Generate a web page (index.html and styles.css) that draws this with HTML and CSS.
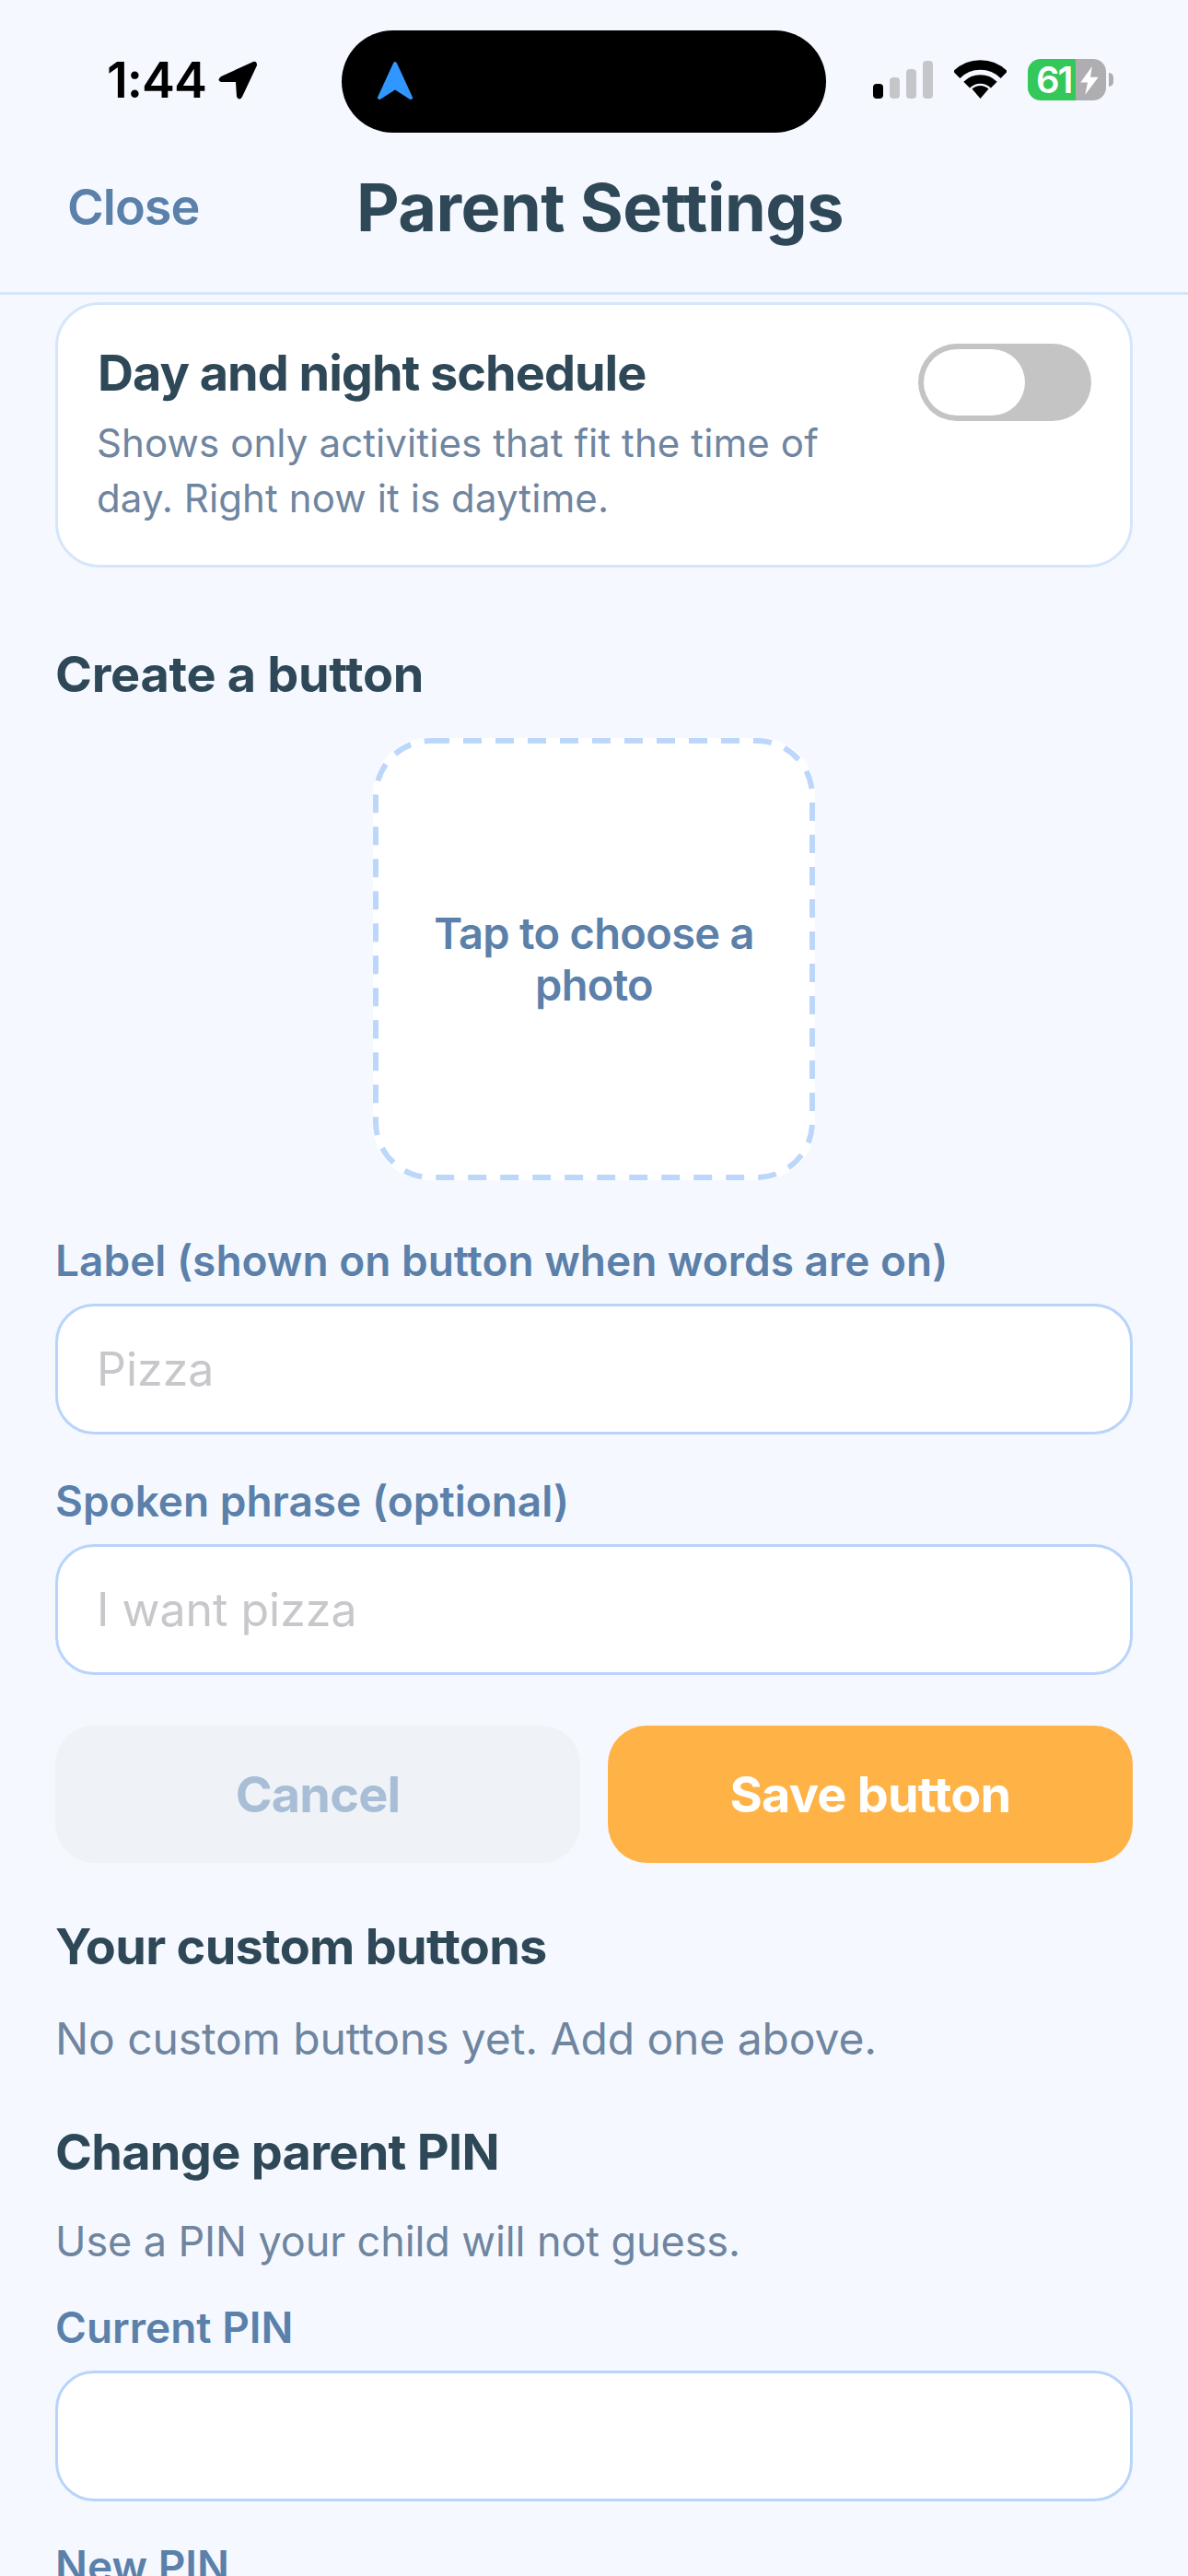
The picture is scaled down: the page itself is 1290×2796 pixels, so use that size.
FILE: index.html
```html
<!DOCTYPE html>
<html lang="en">
<head>
<meta charset="utf-8">
<title>Parent Settings</title>
<link rel="stylesheet" href="styles.css">
</head>
<body>
<div class="screen">
  <header class="top">
    <div class="status">
      <div class="clock">
        <span class="time">1:44</span>
        <svg class="loc" viewBox="237 66 43 44"><path d="M275 68L240 84Q235 88 240 90L256 90L257 106Q260 111 263 106L279 72Q279 67 275 68Z"/></svg>
      </div>
      <div class="island">
        <svg class="nav-arrow" viewBox="410 65 39 43"><path d="M429 68L446 105L429 94L412 105Z"/></svg>
      </div>
      <div class="indicators">
        <div class="signal">
          <i class="bar b1"></i><i class="bar b2"></i><i class="bar b3"></i><i class="bar b4"></i>
        </div>
        <svg class="wifi" viewBox="0 0 57 42"><path class="arc" d="M2.7 16.2A36.5 36.5 0 0 1 54.3 16.2"/><path class="arc mid" d="M13.7 27.2A21 21 0 0 1 43.3 27.2"/><path d="M28.5 42L19.5 31.5A13 13 0 0 1 37.5 31.5Z"/></svg>
        <div class="battery">
          <div class="batt-body">
            <span class="batt-num">61</span>
            <svg class="bolt" viewBox="0 0 20 32"><path d="M13 0L0 18H8L5 32L20 12H11Z"/></svg>
          </div>
          <i class="batt-cap"></i>
        </div>
      </div>
    </div>
    <nav class="nav">
      <span class="close">Close</span>
      <h1 class="title">Parent Settings</h1>
    </nav>
  </header>

  <main class="content">
    <section class="card">
      <div class="card-text">
        <h2 class="card-title">Day and night schedule</h2>
        <p class="card-desc">Shows only activities that fit the time of day. Right now it is daytime.</p>
      </div>
      <div class="toggle"><i class="thumb"></i></div>
    </section>

    <h2 class="heading create">Create a button</h2>
    <div class="photo">
      <svg class="dash" viewBox="0 0 480 480"><rect x="3" y="3" width="474" height="474" rx="60"/></svg>
      <span class="photo-text">Tap to choose a photo</span>
    </div>

    <label class="label l1">Label (shown on button when words are on)</label>
    <input class="field" type="text" placeholder="Pizza">
    <label class="label l2">Spoken phrase (optional)</label>
    <input class="field" type="text" placeholder="I want pizza">

    <div class="actions">
      <div class="btn cancel">Cancel</div>
      <div class="btn save">Save button</div>
    </div>

    <h2 class="heading custom">Your custom buttons</h2>
    <p class="note">No custom buttons yet. Add one above.</p>

    <h2 class="heading pin">Change parent PIN</h2>
    <p class="hint">Use a PIN your child will not guess.</p>
    <label class="label l3">Current PIN</label>
    <input class="field" type="password">
    <label class="label l4">New PIN</label>
  </main>
</div>
</body>
</html>
```

FILE: styles.css
```css
* { box-sizing: border-box; }
html, body { margin: 0; padding: 0; }
body { background: #f5f9ff; font-family: Inter, "Liberation Sans", sans-serif; }
.screen { width: 1290px; height: 2796px; overflow: hidden; background: #f5f9ff; }

.top { height: 320px; border-bottom: 3px solid #d6e6fa; }
.status { display: flex; align-items: flex-start; height: 144px; padding-top: 33px; }
.clock { width: 371px; height: 44px; margin-top: 32px; padding-left: 116px; display: flex; align-items: center; gap: 13px; flex: none; }
.time { font-size: 54px; line-height: 44px; font-weight: 600; color: #000; letter-spacing: -1px; }
.loc { width: 43px; height: 44px; fill: #000; flex: none; }
.island { width: 526px; height: 111px; background: #000; border-radius: 56px; padding: 33px 0 0 39px; flex: none; }
.nav-arrow { display: block; width: 39px; height: 43px; fill: #2f97ff; stroke: #2f97ff; stroke-width: 4; stroke-linejoin: round; }
.indicators { flex: none; display: flex; align-items: flex-start; padding: 32px 0 0 51px; }
.signal { display: flex; align-items: flex-end; gap: 7px; width: 65px; height: 42px; margin-right: 23px; }
.bar { display: block; width: 11px; background: #c4c6ca; border-radius: 4px; }
.b1 { height: 16px; background: #000; }
.b2 { height: 23px; }
.b3 { height: 32px; }
.b4 { height: 41px; }
.wifi { width: 57px; height: 42px; fill: #000; flex: none; margin-right: 23px; }
.wifi .arc { fill: none; stroke: #000; stroke-width: 10.5; }
.wifi .mid { stroke-width: 9.5; }
.battery { display: flex; align-items: center; gap: 3px; margin-top: -1px; }
.batt-body { width: 85px; height: 45px; border-radius: 14px; background: linear-gradient(90deg, #34c759 0 52px, #aeaeb2 52px 85px); position: relative; }
.batt-num { position: absolute; left: 9px; top: 0; font-size: 40px; line-height: 45px; font-weight: 600; color: #fff; letter-spacing: -2px; }
.bolt { position: absolute; left: 57px; top: 8px; width: 20px; height: 31px; fill: #fff; }
.batt-cap { display: block; width: 5px; height: 15px; background: #aeaeb2; border-radius: 0 5px 5px 0; }

.nav { display: grid; grid-template-columns: 1fr auto 1fr; align-items: center; padding: 36px 60px 0 73px; }
.close { font-size: 54px; line-height: 90px; font-weight: 600; color: #5b80aa; letter-spacing: -1px; }
.title { margin: 0; font-size: 72px; line-height: 90px; font-weight: 700; color: #2f4858; letter-spacing: -0.5px; white-space: nowrap; }

.content { padding: 8px 60px 0; }
.card { display: flex; justify-content: space-between; align-items: flex-start; height: 288px; padding: 42px 42px 0 43px; background: #fff; border: 3px solid #d6e6fa; border-radius: 48px; }
.card-text { width: 800px; }
.card-title { margin: 0; font-size: 54px; line-height: 64px; font-weight: 700; color: #2f4858; letter-spacing: -1px; }
.card-desc { margin: 14px 0 0 -1px; font-size: 42px; line-height: 60px; color: #6f85a0; letter-spacing: 0.1px; }
.toggle { width: 188px; height: 84px; padding: 6px; background: #c4c4c4; border-radius: 42px; flex: none; }
.thumb { display: block; width: 110px; height: 72px; background: #fff; border-radius: 36px; }

.heading { margin: 0; font-size: 54px; line-height: 60px; font-weight: 700; color: #2f4858; letter-spacing: -0.3px; }
.create { margin-top: 86px; }
.photo { position: relative; width: 480px; height: 480px; margin: 39px auto 0; display: flex; align-items: center; justify-content: center; text-align: center; border-radius: 60px; background: #fff; padding: 0 50px; }
.dash { position: absolute; inset: 0; width: 480px; height: 480px; fill: none; stroke: #bdd7fb; stroke-width: 6; stroke-dasharray: 20 15; }
.photo-text { font-size: 47px; line-height: 56px; font-weight: 600; color: #5b80aa; letter-spacing: -0.7px; }
.label { display: block; font-size: 46px; line-height: 56px; font-weight: 600; color: #5b80aa; letter-spacing: 0; }
.l1 { margin-top: 59px; }
.l2 { margin-top: 44px; }
.l3 { margin-top: 37px; }
.l4 { margin-top: 42px; }
.field { display: block; width: 100%; height: 142px; margin-top: 19px; padding: 0 42px; background: #fff; border: 3px solid #b9d4fb; border-radius: 42px; font-family: inherit; font-size: 50px; outline: none; }
.field::placeholder { color: #c7c7cc; opacity: 1; }
.actions { display: flex; gap: 30px; margin-top: 55px; }
.btn { flex: 1; height: 149px; display: flex; align-items: center; justify-content: center; border-radius: 42px; font-size: 54px; font-weight: 700; letter-spacing: -0.8px; }
.cancel { background: #eff3f7; color: #a8bdd6; }
.save { background: #ffb347; color: #fff; }
.custom { margin-top: 61px; letter-spacing: -0.7px; }
.note { margin: 40px 0 0; font-size: 48px; line-height: 60px; color: #6f85a0; letter-spacing: -0.1px; }
.pin { margin-top: 63px; letter-spacing: -0.7px; }
.hint { margin: 39px 0 0; font-size: 45px; line-height: 56px; color: #6f85a0; letter-spacing: -0.1px; }
```
